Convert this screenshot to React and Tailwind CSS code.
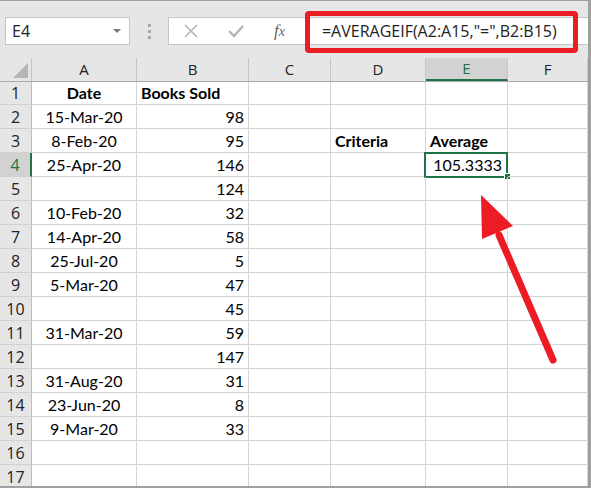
import React from 'react'

const cols = [
  { key: 'A', w: 'w-[105px]' },
  { key: 'B', w: 'w-[112px]' },
  { key: 'C', w: 'w-[82px]' },
  { key: 'D', w: 'w-[95px]' },
  { key: 'E', w: 'w-[82px]' },
  { key: 'F', w: 'w-[80px]' },
]

const rows = [
  { A: 'Date', B: 'Books Sold', bold: true },
  { A: '15-Mar-20', B: '98' },
  { A: '8-Feb-20', B: '95', D: 'Criteria', E: 'Average', boldDE: true },
  { A: '25-Apr-20', B: '146', E: '105.3333' },
  { A: '', B: '124' },
  { A: '10-Feb-20', B: '32' },
  { A: '14-Apr-20', B: '58' },
  { A: '25-Jul-20', B: '5' },
  { A: '5-Mar-20', B: '47' },
  { A: '', B: '45' },
  { A: '31-Mar-20', B: '59' },
  { A: '', B: '147' },
  { A: '31-Aug-20', B: '31' },
  { A: '23-Jun-20', B: '8' },
  { A: '9-Mar-20', B: '33' },
  {},
  {},
]

const cellFont = { fontFamily: 'Lato, "Open Sans", sans-serif' }
const uiFont = { fontFamily: '"Open Sans", "Noto Sans", sans-serif' }

function Cell({ col, row, r }) {
  const v = row[col.key]
  let align = 'justify-start pl-[4px]'
  let bold = false
  if (col.key === 'A') align = 'justify-center'
  if (col.key === 'B') {
    if (r === 1) { align = 'justify-start pl-[4px]'; bold = true }
    else align = 'justify-end pr-[4px]'
  }
  if (col.key === 'A' && r === 1) bold = true
  if ((col.key === 'D' || col.key === 'E') && row.boldDE) bold = true
  if (col.key === 'E' && r === 4) align = 'justify-end pr-[5px]'
  const selected = col.key === 'E' && r === 4
  return (
    <div className={`${col.w} h-full shrink-0 relative flex items-center border-r border-b border-[#d4d4d4] text-[16px] text-black ${align} ${bold ? 'font-bold' : ''}`} style={cellFont}>
      {v}
      {selected && (
        <>
          <div className="absolute -left-[2px] -top-[1px] w-[84px] h-[26px] border-2 border-[#217346]" />
          <div className="absolute -right-[4px] -bottom-[4px] w-[7px] h-[7px] bg-[#217346] border border-white" />
        </>
      )}
    </div>
  )
}

export default function App() {
  return (
    <div className="w-[591px] h-[488px] overflow-hidden relative bg-white border-t border-r-[3px] border-b-2 border-[#a0a0a0]">
      {/* formula bar */}
      <div className="h-[57px] bg-[#e6e6e6] flex items-start pt-[16px] pl-[5px]">
        <div className="w-[125px] h-[28px] bg-white border border-[#c6c6c6] flex items-center pl-[6px] pr-[8px] text-[16px] text-[#222]" style={uiFont}>
          <span className="flex-1">E4</span>
          <span className="w-0 h-0 border-l-[4px] border-r-[4px] border-t-[4px] border-l-transparent border-r-transparent border-t-[#777]" />
        </div>
        <div className="w-[38px] h-[28px] flex flex-col items-center justify-center gap-[3px]">
          <span className="w-[3px] h-[3px] bg-[#a8a8a8]" />
          <span className="w-[3px] h-[3px] bg-[#a8a8a8]" />
          <span className="w-[3px] h-[3px] bg-[#a8a8a8]" />
        </div>
        <div className="flex-1 h-[28px] bg-white border border-[#c6c6c6] border-r-0 flex items-center">
          <svg width="16" height="16" viewBox="0 0 16 16" className="ml-[14px]">
            <path d="M2 2 L14 14 M14 2 L2 14" stroke="#b4b4b4" strokeWidth="1.6" fill="none" />
          </svg>
          <svg width="16" height="16" viewBox="0 0 16 16" className="ml-[29px]">
            <path d="M1 8 L6 13 L15 3" stroke="#b4b4b4" strokeWidth="2.4" fill="none" />
          </svg>
          <span className="ml-[30px] text-[17px] italic text-[#666]" style={{ fontFamily: '"Liberation Serif", serif' }}>
            f<span className="text-[14px]">x</span>
          </span>
          <span className="ml-[37px] text-[16px] text-[#222]" style={uiFont}>=AVERAGEIF(A2:A15,"=",B2:B15)</span>
        </div>
      </div>

      {/* red annotation box */}
      <div className="absolute left-[305px] top-[10px] w-[273px] h-[42px] border-[5px] border-[#ed1c24] rounded-[4px]" />

      {/* header row */}
      <div className="flex h-[24px] bg-[#e6e6e6] border-b border-[#ababab]">
        <div className="w-[32px] h-full shrink-0 border-r border-[#c6c6c6] relative">
          <svg className="absolute left-[13px] top-[5px]" width="15" height="15" viewBox="0 0 15 15">
            <path d="M15 0 L15 15 L0 15 Z" fill="#b5b5b5" />
          </svg>
        </div>
        {cols.map(c => (
          <div
            key={c.key}
            className={`${c.w} h-full shrink-0 flex items-center justify-center text-[15px] border-r border-[#c6c6c6] ${c.key === 'E' ? 'bg-[#d2d2d2] text-[#217346] border-b-2 border-b-[#217346]' : 'text-[#222]'}`}
            style={uiFont}
          >
            {c.key}
          </div>
        ))}
      </div>

      {/* rows */}
      {rows.map((row, i) => {
        const r = i + 1
        const sel = r === 4
        return (
          <div key={r} className={`flex ${r === 1 ? 'h-[23px]' : 'h-[24px]'}`}>
            <div
              className={`w-[32px] h-full shrink-0 flex items-center justify-center text-[16px] border-b border-[#d0d0d0] ${sel ? 'bg-[#d2d2d2] text-[#217346] border-r-2 border-r-[#217346]' : 'bg-[#e6e6e6] text-[#222] border-r border-r-[#bdbdbd]'}`}
              style={uiFont}
            >
              {r}
            </div>
            {cols.map(c => (
              <Cell key={c.key} col={c} row={row} r={r} />
            ))}
          </div>
        )
      })}

      {/* arrow annotation */}
      <svg className="absolute left-0 top-0 pointer-events-none" width="591" height="488" viewBox="0 0 591 488">
        <line x1="553" y1="359" x2="499" y2="234" stroke="#ed1c24" strokeWidth="7" strokeLinecap="round" />
        <polygon points="481,194 482,238 513,225" fill="#ed1c24" />
      </svg>
    </div>
  )
}
